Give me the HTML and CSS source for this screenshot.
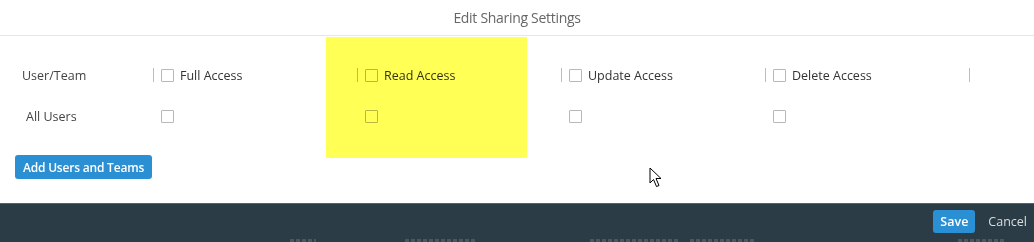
FILE: index.html
```html
<!DOCTYPE html>
<html lang="en">
<head>
	<meta charset="UTF-8">
	<title>Edit Sharing Settings</title>
	<link rel="stylesheet" href="styles.css">
</head>
<body>
	<div id="dialog">
		<div class="header">Edit Sharing Settings</div>
		<div class="content">
			<div class="highlight"></div>
			<div class="grid">
				<div class="label">User/Team</div>
				<div class="cell sep"><span class="box"></span>Full Access</div>
				<div class="cell sep"><span class="box"></span>Read Access</div>
				<div class="cell sep"><span class="box"></span>Update Access</div>
				<div class="cell sep"><span class="box"></span>Delete Access</div>
				<div class="cell sep"></div>

				<div class="label indent">All Users</div>
				<div class="cell"><span class="box"></span></div>
				<div class="cell"><span class="box"></span></div>
				<div class="cell"><span class="box"></span></div>
				<div class="cell"><span class="box"></span></div>
				<div class="cell"></div>
			</div>
			<button class="btn add">Add Users and Teams</button>
			<svg class="cursor" width="14" height="22" viewBox="0 0 14 22">
				<path d="M1 1 L1 16 L4.5 12.5 L7.5 19.5 L10 18.5 L7 11.5 L12 11.5 Z" fill="#fff" stroke="#000" stroke-width="1"/>
			</svg>
		</div>
		<div class="footer">
			<button class="btn save">Save</button>
			<span class="cancel">Cancel</span>
			<!-- table header showing through below the bar -->
			<div class="behind">
				<i style="left:290px;width:26px"></i>
				<i style="left:405px;width:70px"></i>
				<i style="left:590px;width:90px"></i>
				<i style="left:690px;width:65px"></i>
				<i style="left:958px;width:48px"></i>
			</div>
		</div>
	</div>
</body>
</html>
```

FILE: styles.css
```css
*{
	margin: 0;
	padding: 0;
	box-sizing: border-box;
}
body{
	width: 1034px;
	height: 242px;
	overflow: hidden;
	background: #fff;
	font-family: "Open Sans", "Liberation Sans", sans-serif;
	color: #333;
}
.header{
	height: 36px;
	line-height: 35px;
	text-align: center;
	font-size: 14px;
	color: #666;
	border-bottom: 1px solid #e6e6e6;
	letter-spacing: -0.3px;
}
.content{
	position: relative;
	height: 167px;
	padding-top: 25px;
}
/* marker highlight over the read column */
.highlight{
	position: absolute;
	left: 326px;
	top: 1px;
	width: 201px;
	height: 121px;
	background: #ffff55;
	mix-blend-mode: multiply;
	z-index: 2;
	pointer-events: none;
}
.grid{
	display: grid;
	grid-template-columns: 153px repeat(4, 204px) 40px;
	grid-template-rows: 28px 28px;
	row-gap: 13px;
	font-size: 12.5px;
}
.label{
	padding-left: 22px;
	display: flex;
	align-items: center;
	color: #444;
}
.label.indent{
	padding-left: 26px;
}
.cell{
	display: flex;
	align-items: center;
	padding-left: 8px;
	position: relative;
	color: #333;
}
.cell.sep::before{
	content: "";
	position: absolute;
	left: 0;
	top: 7px;
	width: 1px;
	height: 14px;
	background: #bdbdbd;
}
.box{
	width: 13px;
	height: 13px;
	border: 1px solid #b8b8b8;
	border-radius: 1px;
	margin-right: 6px;
	background: #fff;
}
.btn{
	border: none;
	border-radius: 3px;
	background: #2b8fd3;
	color: #fff;
	font-family: "Open Sans", "Liberation Sans", sans-serif;
	font-weight: 600;
	font-size: 12px;
}
.add{
	display: block;
	margin: 25px 0 0 15px;
	width: 137px;
	height: 24px;
	letter-spacing: -0.2px;
}
.cursor{
	position: absolute;
	left: 649px;
	top: 131px;
}
.footer{
	position: relative;
	height: 39px;
	background: #2c3c46;
	border-top: 1px solid #56636c;
	display: flex;
	align-items: flex-start;
	justify-content: flex-end;
	padding: 6px 7px 0 0;
	overflow: hidden;
}
.save{
	width: 42px;
	height: 23px;
	font-size: 12.5px;
}
.cancel{
	margin-left: 13px;
	line-height: 23px;
	font-size: 12.5px;
	color: #d8dde0;
}
.behind i{
	position: absolute;
	top: 35px;
	height: 3px;
	background: repeating-linear-gradient(90deg, #4a5760 0 4px, transparent 4px 6px);
}
```
